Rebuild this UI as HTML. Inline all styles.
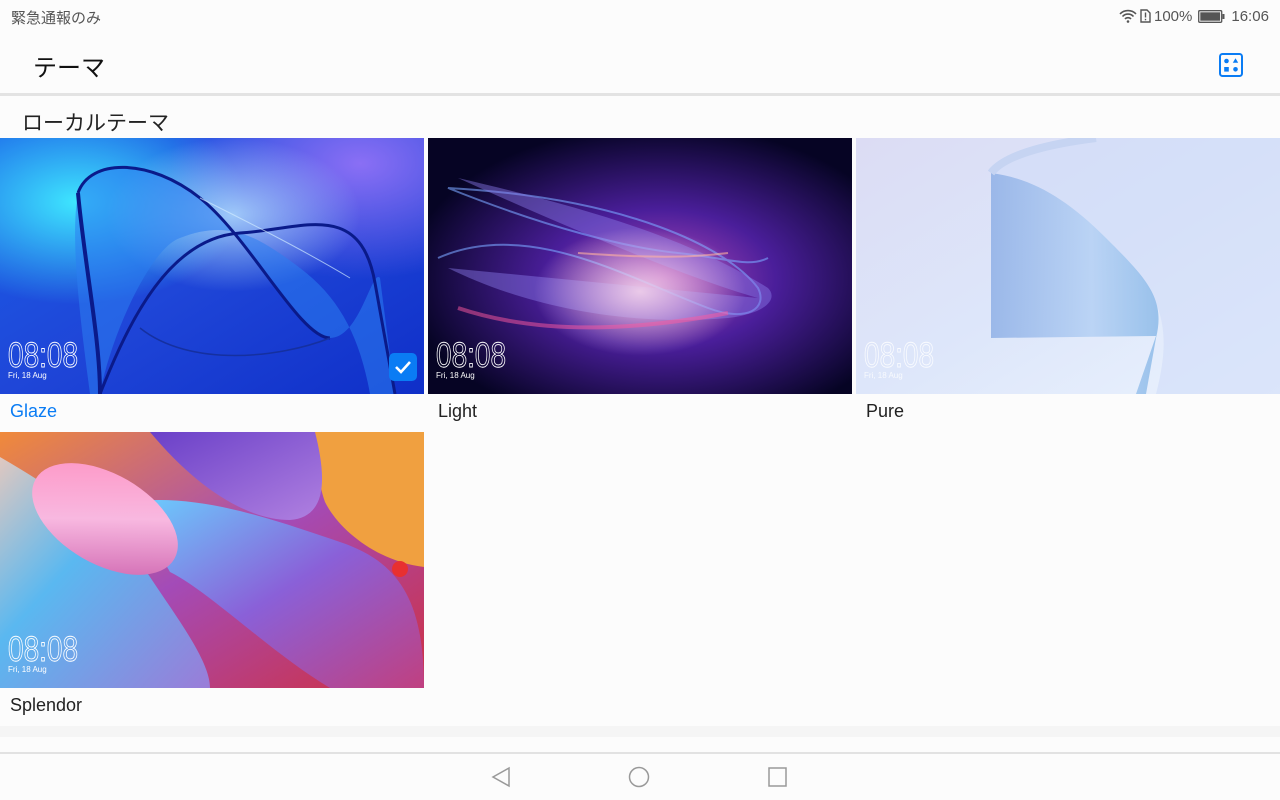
<!DOCTYPE html>
<html><head><meta charset="utf-8">
<style>
*{margin:0;padding:0;box-sizing:border-box}
body{width:1280px;height:800px;background:#fcfcfc;font-family:"Liberation Sans","Noto Sans CJK JP",sans-serif;position:relative;overflow:hidden}
.abs{position:absolute}
.tile{position:absolute;width:424px;height:256px;overflow:hidden}
.tile svg{position:absolute;left:0;top:0}
.clk{position:absolute;left:0;top:0}
.date{position:absolute;left:8px;top:233px;font-size:8px;color:#fff}
.lbl{position:absolute;font-size:18px;color:#222}
</style></head><body>
<div class="abs" style="left:11px;top:7px;font-size:15px;color:#555">緊急通報のみ</div>
<div class="abs" style="left:1119px;top:6px;height:20px;display:flex;align-items:center;gap:3px;font-size:15px;color:#555">
<svg width="18" height="14" viewBox="0 0 18 14"><path d="M1 5a11 11 0 0 1 16 0M3.5 7.5a7.5 7.5 0 0 1 11 0M6 10a4 4 0 0 1 6 0" stroke="#555" stroke-width="1.6" fill="none"/><circle cx="9" cy="12.5" r="1.3" fill="#555"/></svg>
<svg width="11" height="14" viewBox="0 0 11 14"><path d="M1 1h6l3 3v9H1z" stroke="#555" stroke-width="1.4" fill="none"/><rect x="4.8" y="3.5" width="1.4" height="5" fill="#555"/><rect x="4.8" y="9.8" width="1.4" height="1.5" fill="#555"/></svg>
<span>100%</span>
<svg width="27" height="13" viewBox="0 0 27 13" style="margin-left:3px"><rect x="0.7" y="0.7" width="23" height="11.6" rx="1" stroke="#555" stroke-width="1.3" fill="none"/><rect x="2.3" y="2.3" width="19.8" height="8.4" fill="#555"/><rect x="24.5" y="4" width="2" height="5" fill="#555"/></svg>
<span style="margin-left:3px">16:06</span></div>
<div class="abs" style="left:33px;top:48px;font-size:24px;color:#111">テーマ</div>
<svg class="abs" style="left:1219px;top:53px" width="24" height="24" viewBox="0 0 24 24"><rect x="1" y="1" width="22" height="22" rx="2.5" stroke="#0a7cf4" stroke-width="2" fill="none"/><circle cx="7.5" cy="8" r="2.3" fill="#0a7cf4"/><path d="M16.5 5.3l2.7 4.4h-5.4z" fill="#0a7cf4"/><rect x="5.2" y="14" width="4.6" height="4.6" fill="#0a7cf4"/><circle cx="16.5" cy="16.3" r="2.3" fill="#0a7cf4"/></svg>
<div class="abs" style="left:0;top:93px;width:1280px;height:3px;background:#e3e3e3"></div>
<div class="abs" style="left:22px;top:107px;font-size:21px;color:#222">ローカルテーマ</div>

<!-- Glaze -->
<div class="tile" style="left:0;top:138px">
<svg width="424" height="256" viewBox="0 0 424 256">
<defs>
<linearGradient id="g1" x1="0" y1="0" x2="1" y2="1"><stop offset="0" stop-color="#1a60e8"/><stop offset=".5" stop-color="#1f46d8"/><stop offset="1" stop-color="#0f2fc8"/></linearGradient>
<radialGradient id="g1b" cx=".18" cy=".25" r=".4"><stop offset="0" stop-color="#3ee6ff"/><stop offset="1" stop-color="#3ee6ff" stop-opacity="0"/></radialGradient>
<radialGradient id="g1c" cx=".85" cy=".1" r=".45"><stop offset="0" stop-color="#8a6ff5"/><stop offset="1" stop-color="#8a6ff5" stop-opacity="0"/></radialGradient>
<radialGradient id="g1d" cx=".55" cy=".3" r=".3"><stop offset="0" stop-color="#b9e4ff" stop-opacity=".8"/><stop offset="1" stop-color="#b9e4ff" stop-opacity="0"/></radialGradient>
</defs>
<rect width="424" height="256" fill="url(#g1)"/>
<rect width="424" height="256" fill="url(#g1b)"/>
<rect width="424" height="256" fill="url(#g1c)"/>
<rect width="424" height="256" fill="url(#g1d)"/>
<path d="M78 55 C90 20 150 20 200 60 C250 100 300 200 330 200 C360 200 372 130 380 140 L395 256 L370 256 C360 200 340 160 300 130 C260 100 230 80 180 100 C150 110 110 200 100 256 L90 256 C80 180 70 100 78 55Z" fill="#2c7df0" opacity=".55"/>
<path d="M78 55 C90 20 150 20 200 60 C250 100 300 200 330 200" stroke="#0a1a8a" stroke-width="3" fill="none"/>
<path d="M78 55 C85 130 100 200 100 256" stroke="#0a1a8a" stroke-width="4" fill="none"/>
<path d="M100 256 C130 180 170 100 240 95 C300 92 360 60 375 145 L395 256" stroke="#0a1a8a" stroke-width="3" fill="none"/>
<path d="M140 190 C190 230 280 220 330 200" stroke="#1530a0" stroke-width="1.5" fill="none"/>
<path d="M200 60 C240 80 300 110 350 140" stroke="#cfeaff" stroke-width="1" fill="none" opacity=".7"/>
</svg>
<svg class="clk" width="424" height="256"><text transform="translate(8,229) scale(0.8,1)" font-family="Liberation Sans" font-size="35" fill="none" stroke="#fff" stroke-width="0.9">08:08</text></svg>
<div class="date">Fri, 18 Aug</div>
<div class="abs" style="left:389px;top:215px;width:28px;height:28px;border-radius:5px;background:#0a7cf4"></div>
<svg class="abs" style="left:393px;top:220px" width="20" height="18" viewBox="0 0 20 18"><path d="M3 9l5 5 9-10" stroke="#fff" stroke-width="2.6" fill="none"/></svg>
</div>
<div class="lbl" style="left:10px;top:401px;color:#0a7cf4">Glaze</div>

<!-- Light -->
<div class="tile" style="left:428px;top:138px">
<svg width="424" height="256" viewBox="0 0 424 256">
<defs>
<radialGradient id="l1" cx=".55" cy=".55" r=".6"><stop offset="0" stop-color="#b24ab8"/><stop offset=".45" stop-color="#4a1e9a"/><stop offset="1" stop-color="#060424"/></radialGradient>
<radialGradient id="l2" cx=".5" cy=".6" r=".25"><stop offset="0" stop-color="#f4d6ec" stop-opacity=".9"/><stop offset="1" stop-color="#f4d6ec" stop-opacity="0"/></radialGradient>
</defs>
<rect width="424" height="256" fill="url(#l1)"/>
<path d="M10 120 C100 80 200 140 280 170 C320 185 340 170 330 150 C300 110 200 60 20 50 C120 90 200 110 250 115 C300 120 320 130 340 120" stroke="#7aa5ff" stroke-width="2" fill="none" opacity=".6"/>
<path d="M20 130 C80 160 180 190 300 180 C340 175 350 160 340 150 C260 100 160 70 30 40 C140 90 260 140 330 160 Z" fill="#8a7be8" opacity=".45"/>
<rect width="424" height="256" fill="url(#l2)"/>
<path d="M30 170 C120 200 220 190 300 175" stroke="#ff5aa0" stroke-width="4" fill="none" opacity=".5"/>
<path d="M150 115 C220 120 260 120 300 115" stroke="#ffb3a0" stroke-width="2" fill="none" opacity=".6"/>
</svg>
<svg class="clk" width="424" height="256"><text transform="translate(8,229) scale(0.8,1)" font-family="Liberation Sans" font-size="35" fill="none" stroke="#fff" stroke-width="0.9">08:08</text></svg>
<div class="date">Fri, 18 Aug</div>
</div>
<div class="lbl" style="left:438px;top:401px">Light</div>

<!-- Pure -->
<div class="tile" style="left:856px;top:138px">
<svg width="424" height="256" viewBox="0 0 424 256">
<defs>
<linearGradient id="p1" x1="0" y1="0" x2="1" y2="1"><stop offset="0" stop-color="#dcdcf4"/><stop offset=".5" stop-color="#dde6fa"/><stop offset="1" stop-color="#eaf2fd"/></linearGradient>
<linearGradient id="p2" x1="0" y1="0" x2="1" y2="0"><stop offset="0" stop-color="#8fb0e6"/><stop offset=".6" stop-color="#b4d0f4"/><stop offset="1" stop-color="#8cbae8"/></linearGradient>
</defs>
<rect width="424" height="256" fill="url(#p1)"/>
<path d="M135 35 C150 15 190 5 240 0 L424 0 L424 256 L300 256 C320 180 300 150 250 100 C210 60 175 40 135 35Z" fill="#d0dcf8" opacity=".6"/>
<path d="M135 35 C175 40 210 60 250 100 C290 140 310 160 300 200 L290 256 L280 256 L300 198 L135 200 Z" fill="url(#p2)" opacity=".85"/>
<path d="M135 35 C150 15 200 5 240 0" stroke="#c6d4f2" stroke-width="8" fill="none"/>
</svg>
<svg class="clk" width="424" height="256"><text transform="translate(8,229) scale(0.8,1)" font-family="Liberation Sans" font-size="35" fill="none" stroke="#fff" stroke-width="0.9" opacity=".85">08:08</text></svg>
<div class="date" style="color:rgba(255,255,255,.8)">Fri, 18 Aug</div>
</div>
<div class="lbl" style="left:866px;top:401px">Pure</div>

<!-- Splendor -->
<div class="tile" style="left:0;top:432px">
<svg width="424" height="256" viewBox="0 0 424 256">
<defs>
<linearGradient id="s1" x1="0" y1="0" x2="1" y2="1"><stop offset="0" stop-color="#f08a3a"/><stop offset=".5" stop-color="#a34bb8"/><stop offset="1" stop-color="#d03040"/></linearGradient>
<linearGradient id="s2" x1="0" y1="0" x2="1" y2="1"><stop offset="0" stop-color="#e0c8c0"/><stop offset=".4" stop-color="#5ab8f0"/><stop offset="1" stop-color="#9a7cd8"/></linearGradient>
<linearGradient id="s3" x1="0" y1="0" x2="1" y2="1"><stop offset="0" stop-color="#ff90c0"/><stop offset=".5" stop-color="#f8b8e0"/><stop offset="1" stop-color="#c858a8"/></linearGradient>
<linearGradient id="s4" x1="0" y1="0" x2="1" y2="1"><stop offset="0" stop-color="#6a40c8"/><stop offset="1" stop-color="#b080e0"/></linearGradient>
<linearGradient id="s5" x1="0" y1="0" x2="1" y2="1"><stop offset="0" stop-color="#6ad0ff"/><stop offset=".5" stop-color="#8a60d8"/><stop offset="1" stop-color="#c04080"/></linearGradient>
</defs>
<rect width="424" height="256" fill="url(#s1)"/>
<path d="M310 0 L424 0 L424 135 C380 130 340 100 325 70 C318 50 315 20 310 0Z" fill="#f0a040"/>
<path d="M150 0 L315 0 C325 40 330 85 290 88 C250 88 200 60 150 0Z" fill="url(#s4)"/>
<path d="M130 70 C200 60 280 90 340 110 C400 130 424 170 424 256 L330 256 C270 220 210 160 170 140 Z" fill="url(#s5)"/>
<path d="M0 25 C60 60 120 100 150 145 C180 190 210 230 210 256 L0 256 Z" fill="url(#s2)"/>
<ellipse cx="105" cy="87" rx="80" ry="45" transform="rotate(30 105 87)" fill="url(#s3)"/>
<circle cx="400" cy="137" r="8" fill="#e83030"/>
</svg>
<svg class="clk" width="424" height="256"><text transform="translate(8,229) scale(0.8,1)" font-family="Liberation Sans" font-size="35" fill="none" stroke="#fff" stroke-width="0.9">08:08</text></svg>
<div class="date">Fri, 18 Aug</div>
</div>
<div class="lbl" style="left:10px;top:695px">Splendor</div>

<div class="abs" style="left:0;top:726px;width:1280px;height:11px;background:#f5f5f5"></div>
<div class="abs" style="left:0;top:752px;width:1280px;height:2px;background:#e2e2e2"></div>
<svg class="abs" style="left:490px;top:765px" width="300" height="24" viewBox="0 0 300 24">
<path d="M19 3 L3 12 L19 21 Z" stroke="#999" stroke-width="1.5" fill="none"/>
<circle cx="149" cy="12" r="9.5" stroke="#999" stroke-width="1.5" fill="none"/>
<rect x="279" y="3" width="17" height="18" stroke="#999" stroke-width="1.5" fill="none"/>
</svg>
</body></html>
